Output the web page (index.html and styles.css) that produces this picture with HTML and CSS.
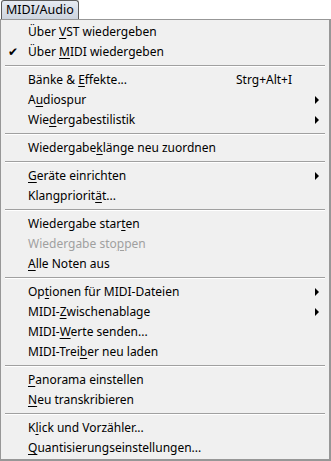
FILE: index.html
```html
<!DOCTYPE html>
<html lang="de">
<head>
  <meta charset="UTF-8">
  <title>MIDI/Audio</title>
  <link rel="stylesheet" href="styles.css">
</head>
<body>
  <div class="menubar">
    <span class="menu-title">MIDI/Audio</span>
  </div>

  <div class="menu">
    <div class="item">Über <u>V</u>ST wiedergeben</div>
    <div class="item checked"><span class="check">✔</span>Über <u>M</u>IDI wiedergeben</div>
    <div class="sep"></div>
    <div class="item">Bänke &amp; <u>E</u>ffekte...<span class="shortcut">Strg+Alt+I</span></div>
    <div class="item sub">A<u>u</u>diospur</div>
    <div class="item sub">Wie<u>d</u>ergabestilistik</div>
    <div class="sep"></div>
    <div class="item">Wiedergabe<u>k</u>länge neu zuordnen</div>
    <div class="sep"></div>
    <div class="item sub"><u>G</u>eräte einrichten</div>
    <div class="item">Klangpriorit<u>ä</u>t...</div>
    <div class="sep"></div>
    <div class="item">Wiedergabe star<u>t</u>en</div>
    <div class="item disabled">Wiedergabe sto<u>p</u>pen</div>
    <div class="item"><u>A</u>lle Noten aus</div>
    <div class="sep"></div>
    <div class="item sub">Op<u>t</u>ionen für MIDI-Dateien</div>
    <div class="item sub">MIDI-<u>Z</u>wischenablage</div>
    <div class="item">MIDI-<u>W</u>erte senden...</div>
    <div class="item">MIDI-Trei<u>b</u>er neu laden</div>
    <div class="sep"></div>
    <div class="item"><u>P</u>anorama einstellen</div>
    <div class="item"><u>N</u>eu transkribieren</div>
    <div class="sep"></div>
    <div class="item">K<u>l</u>ick und Vorzähler...</div>
    <div class="item"><u>Q</u>uantisierungseinstellungen...</div>
  </div>
</body>
</html>
```

FILE: styles.css
```css
body {
  margin: 0;
  padding: 0;
  background: #fff;
  font-family: "Noto Sans", "Open Sans", sans-serif;
  font-size: 12px;
  color: #000;
}

/* menu bar button */
.menubar {
  height: 19px;
  display: flex;
  align-items: flex-end;
}

.menu-title {
  display: inline-block;
  height: 18px;
  line-height: 17px;
  padding: 0 4px;
  margin-left: 1px;
  font-size: 12.5px;
  border: 1px solid #5a5a5a;
  border-bottom: none;
  border-radius: 3px 3px 0 0;
  background: linear-gradient(#e6ebf2, #cdd4de);
}

/* dropdown */
.menu {
  background: #f0f0f0;
  border: 1px solid #979797;
  border-right: 2px solid #979797;
  border-bottom: 2px solid #979797;
  padding: 2px 0;
  height: 442px;
  box-sizing: border-box;
}

.item {
  position: relative;
  height: 20px;
  line-height: 20px;
  padding-left: 27px;
  white-space: nowrap;
}

.item u {
  text-decoration-thickness: 1px;
  text-underline-offset: 2px;
}

.check {
  position: absolute;
  left: 7px;
  top: 0;
  font-size: 12px;
  font-family: "DejaVu Sans", sans-serif;
}

.shortcut {
  position: absolute;
  left: 235px;
}

.sub::after {
  content: "";
  position: absolute;
  right: 10px;
  top: 6px;
  border-left: 4px solid #000;
  border-top: 4px solid transparent;
  border-bottom: 4px solid transparent;
}

.disabled {
  color: #a0a0a0;
}

.sep {
  height: 1px;
  margin: 3px 4px 3px 4px;
  background: #a0a0a0;
  border-bottom: 1px solid #fff;
}
```
